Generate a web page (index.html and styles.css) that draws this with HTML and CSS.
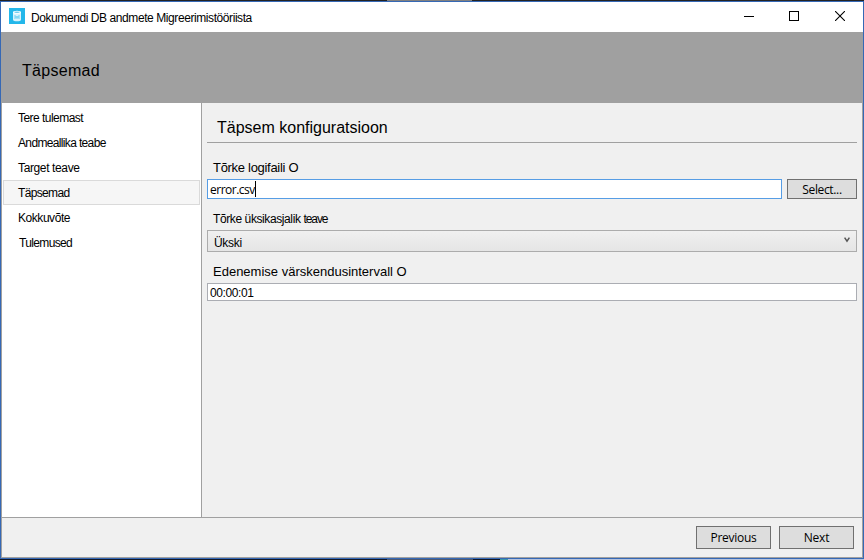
FILE: index.html
```html
<!DOCTYPE html>
<html lang="et">
<head>
<meta charset="utf-8">
<title>Dokumendi DB andmete Migreerimistööriista</title>
<link rel="stylesheet" href="styles.css">
</head>
<body>
<div class="desk-top"></div>
<div class="window">
  <div class="titlebar">
    <svg class="app-icon" width="16" height="16" viewBox="0 0 16 16">
      <rect width="16" height="16" fill="#23b7ea"/>
      <path d="M4 4.2v7.6c0 2 8 2 8 0V4.2z" fill="#d8f3fc"/>
      <ellipse cx="8" cy="4.2" rx="4" ry="1.5" fill="#fff"/>
      <ellipse cx="8" cy="4.3" rx="2.8" ry=".7" fill="#6accf0"/>
      <path d="M6 7v4M8 8v3M10 7v4M6 9h4" stroke="#58c8f0" stroke-width=".8" fill="none"/>
    </svg>
    <span class="app-title">Dokumendi DB andmete Migreerimistööriista</span>
    <div class="controls">
      <svg class="minimize" width="10" height="10" viewBox="0 0 10 10"><path d="M0 5.5h10" stroke="#000"/></svg>
      <svg width="10" height="10" viewBox="0 0 10 10"><rect x=".5" y=".5" width="9" height="9" fill="none" stroke="#000"/></svg>
      <svg width="10" height="10" viewBox="0 0 10 10"><path d="M0 0l10 10M10 0L0 10" stroke="#000" stroke-width="1.1"/></svg>
    </div>
  </div>
  <div class="banner"><span class="banner-title">Täpsemad</span></div>
  <div class="content">
    <div class="main">
      <div class="sidebar">
        <div class="item"><span class="n1">Tere tulemast</span></div>
        <div class="item"><span class="n2">Andmeallika teabe</span></div>
        <div class="item"><span class="n3">Target teave</span></div>
        <div class="item active"><span class="n4">Täpsemad</span></div>
        <div class="item"><span class="n5">Kokkuvõte</span></div>
        <div class="item"><span class="n6">Tulemused</span></div>
      </div>
      <div class="panel">
        <div class="heading"><span class="heading-text">Täpsem konfiguratsioon</span></div>
        <div class="label label-log"><span class="l1">Tõrke logifaili O</span></div>
        <div class="row">
          <div class="input focus"><span class="file">error.csv</span><i class="caret"></i></div>
          <div class="button select"><span class="pick">Select...</span></div>
        </div>
        <div class="label label-detail"><span class="l2">Tõrke üksikasjalik</span><span class="l2b">teave</span></div>
        <div class="combo"><span class="combo-text">Ükski</span>
          <svg width="6" height="6" viewBox="0 0 6 6"><path d="M.6 .6L3 4.2 5.4 .6" fill="none" stroke="#555" stroke-width="1.5"/></svg>
        </div>
        <div class="label label-interval"><span class="l3">Edenemise värskendusintervall O</span></div>
        <div class="input interval"><span class="time">00:00:01</span></div>
      </div>
    </div>
    <div class="footer">
      <div class="button nav"><span class="prev">Previous</span></div>
      <div class="button nav"><span class="next">Next</span></div>
    </div>
  </div>
</div>
<div class="desk-bottom"></div>
</body>
</html>
```
FILE: styles.css
```css
* { box-sizing: border-box; }
body { margin: 0; width: 864px; height: 560px; overflow: hidden; display: flex; flex-direction: column; font-family: "Liberation Sans", sans-serif; font-size: 12px; color: #000; }
span { white-space: nowrap; }
.desk-top { height: 1px; background: linear-gradient(90deg, #222 387px, #808080 387px, #808080 472px, #222 472px); }
.desk-bottom { height: 1px; background: linear-gradient(90deg, #101626 387px, #4a5670 387px, #4a5670 473px, #101626 473px, #101626 500px, #3c96a8 500px, #3c96a8 508px, #b4c2de 508px); }
.window { height: 558px; border: 1px solid #3568b5; display: flex; flex-direction: column; }
.titlebar { height: 30px; background: #fff; display: flex; align-items: center; padding: 0 18px 0 8px; }
.app-icon { margin-bottom: 2px; }
.app-title { margin: 2px 0 0 6px; letter-spacing: -0.42px; }
.controls { margin-left: auto; display: flex; gap: 36px; margin-bottom: 2px; }
.controls svg { display: block; }
.controls .minimize { margin-right: -1px; }
.banner { height: 71px; background: #a0a0a0; padding: 29px 0 0 21px; line-height: 20px; font-size: 16px; letter-spacing: 0.3px; }
.content { flex: 1; min-height: 0; border: 1px solid #a0a0a0; border-top: 0; display: flex; flex-direction: column; background: #f0f0f0; }
.main { height: 415px; display: flex; border-bottom: 1px solid #a0a0a0; }
.sidebar { width: 200px; background: #fff; border-right: 1px solid #a0a0a0; padding: 2px 1px 0 1px; }
.item { height: 25px; border: 1px solid transparent; line-height: 25px; padding-left: 14px; }
.item.active { background: #f6f6f6; border-color: #dadada; }
.n1 { letter-spacing: -0.53px; }
.n2 { letter-spacing: -0.65px; }
.n3 { letter-spacing: -0.37px; }
.n4 { letter-spacing: -0.65px; }
.n5 { letter-spacing: -0.45px; }
.n6 { margin-left: 1px; letter-spacing: -0.65px; }
.panel { flex: 1; padding: 0 5px; }
.heading { height: 40px; border-bottom: 1px solid #a0a0a0; padding: 14px 0 0 10px; font-size: 16px; line-height: 22px; }
.label { padding-left: 6px; }
.label-log { height: 36px; line-height: 16px; padding-top: 17px; font-size: 13px; letter-spacing: -0.3px; }
.row { display: flex; gap: 5px; }
.input { height: 20px; background: #fff; border: 1px solid #abadb3; padding-left: 2px; display: flex; align-items: center; }
.input.focus { width: 575px; border-color: #569de5; font-family: "Open Sans", sans-serif; }
.file { letter-spacing: -0.5px; }
.caret { width: 1px; height: 16px; background: #000; margin-bottom: 1px; }
.button { display: flex; align-items: center; justify-content: center; background: #ddd; border: 1px solid #707070; font-family: "Open Sans", sans-serif; font-size: 12px; }
.select { width: 70px; height: 20px; }
.pick { letter-spacing: -0.35px; }
.prev { letter-spacing: -0.3px; }
.next { letter-spacing: -0.2px; }
.label-detail { height: 31px; padding-top: 12px; line-height: 16px; font-size: 12px; }
.l2 { letter-spacing: -0.4px; }
.l2b { margin-left: 3px; letter-spacing: -1.1px; }
.combo { height: 22px; border: 1px solid #acacac; background: linear-gradient(#f0f0f0, #e5e5e5); display: flex; justify-content: space-between; padding: 0 6px; line-height: 24px; letter-spacing: -0.3px; }
.combo svg { margin-top: 6px; }
.label-interval { height: 31px; padding-top: 12px; line-height: 16px; font-size: 13px; }
.input.interval { height: 18px; padding-top: 2px; }
.time { letter-spacing: -0.4px; }
.footer { flex: 1; display: flex; justify-content: flex-end; gap: 8px; padding: 8px 8px 0 0; }
.nav { width: 75px; height: 23px; }
```
